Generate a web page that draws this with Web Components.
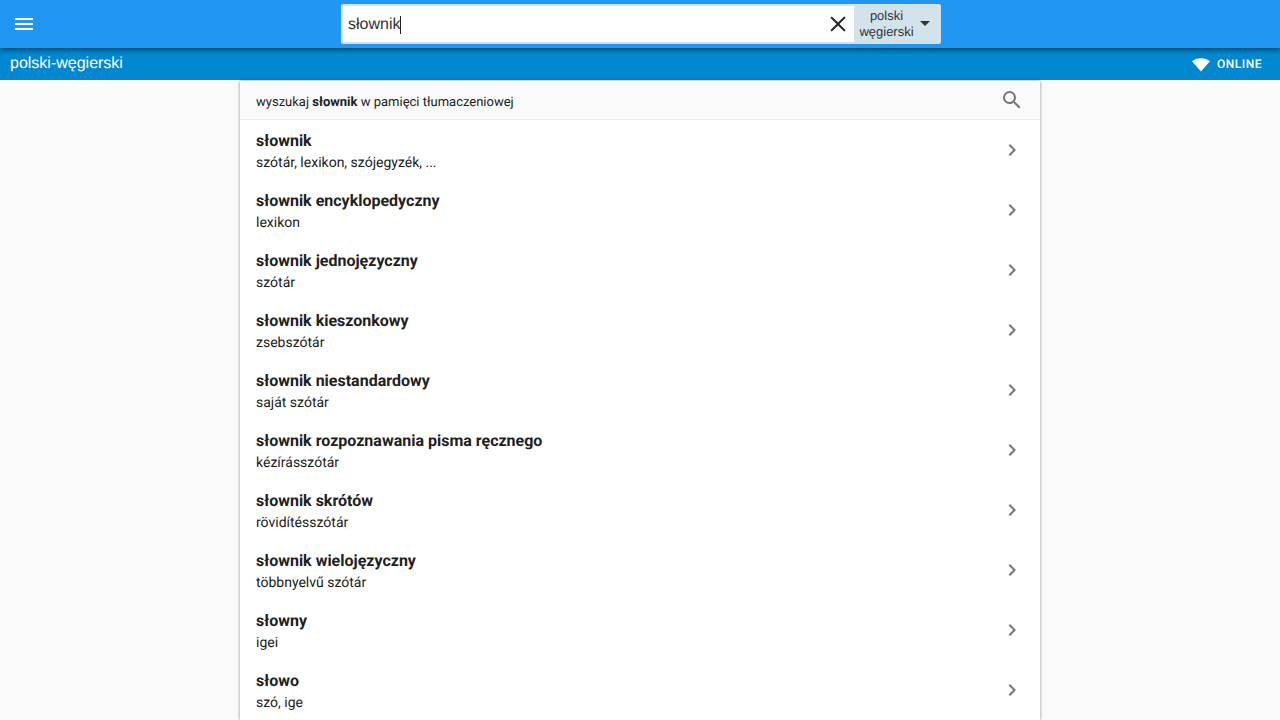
<!DOCTYPE html>
<html lang="pl">
<head>
<meta charset="utf-8">
<title>słownik</title>
<style>
  html, body { margin: 0; height: 720px; overflow: hidden; background: #fafafa; font-family: Roboto, sans-serif; text-rendering: geometricPrecision; }
</style>
</head>
<body>
<app-header></app-header>
<sub-bar label="polski-węgierski"></sub-bar>
<suggest-panel query="słownik">
  <suggest-row term="słownik" meaning="szótár, lexikon, szójegyzék, ..."></suggest-row>
  <suggest-row term="słownik encyklopedyczny" meaning="lexikon"></suggest-row>
  <suggest-row term="słownik jednojęzyczny" meaning="szótár"></suggest-row>
  <suggest-row term="słownik kieszonkowy" meaning="zsebszótár"></suggest-row>
  <suggest-row term="słownik niestandardowy" meaning="saját szótár"></suggest-row>
  <suggest-row term="słownik rozpoznawania pisma ręcznego" meaning="kézírásszótár"></suggest-row>
  <suggest-row term="słownik skrótów" meaning="rövidítésszótár"></suggest-row>
  <suggest-row term="słownik wielojęzyczny" meaning="többnyelvű szótár"></suggest-row>
  <suggest-row term="słowny" meaning="igei"></suggest-row>
  <suggest-row term="słowo" meaning="szó, ige"></suggest-row>
</suggest-panel>

<script>
// Top bar with menu button and search box
class AppHeader extends HTMLElement {
  constructor() {
    super();
    this.attachShadow({ mode: 'open' });
  }

  connectedCallback() {
    this.shadowRoot.innerHTML = `
      <style>
        :host {
          display: grid;
          grid-template-columns: 1fr 600px 1fr;
          align-items: center;
          height: 48px;
          padding-left: 2px;
          background: #2196f3;
          position: relative;
          z-index: 2;
          box-shadow: 0 2px 5px rgba(0, 0, 0, 0.5);
        }
        .menu { display: flex; padding-left: 10px; }
        .search {
          display: flex;
          height: 40px;
          box-sizing: border-box;
          border-radius: 2px;
          overflow: hidden;
          background: #d2e3ec;
        }
        .field {
          flex: 1;
          display: flex;
          align-items: center;
          margin: 2px 0 2px 2px;
          padding-left: 5px;
          background: #fff;
          font-family: "Liberation Sans", sans-serif;
          font-size: 16px;
          color: #333;
        }
        .query { padding-top: 1px; }
        .caret { width: 1px; height: 18px; margin-top: 1px; background: #222; }
        .clear { display: flex; margin-left: auto; margin-right: 4px; }
        .lang {
          width: 87px;
          display: flex;
          align-items: center;
          font-family: "Liberation Sans", sans-serif;
          font-size: 13px;
          line-height: 16px;
          color: #333;
        }
        .lang span { width: 65px; text-align: center; }
      </style>
      <div class="menu">
        <svg width="24" height="24" viewBox="0 0 24 24" fill="#fff"><path d="M3 18h18v-2H3v2zm0-5h18v-2H3v2zm0-7v2h18V6H3z"/></svg>
      </div>
      <div class="search">
        <div class="field"><span class="query">słownik</span><i class="caret"></i>
          <div class="clear"><svg width="24" height="24" viewBox="0 0 24 24" fill="#222"><path d="M19.6 5.8l-1.4-1.4L12 10.6 5.8 4.4 4.4 5.8 10.6 12l-6.2 6.2 1.4 1.4 6.2-6.2 6.2 6.2 1.4-1.4-6.2-6.2z"/></svg></div>
        </div>
        <div class="lang"><span>polski<br>węgierski</span>
          <svg width="12" height="6" viewBox="0 0 12 6" fill="#333"><path d="M1 0h10L6 5z"/></svg>
        </div>
      </div>
      <div></div>
    `;
  }
}

// Second bar: language pair and connection state
class SubBar extends HTMLElement {
  constructor() {
    super();
    this.attachShadow({ mode: 'open' });
  }

  connectedCallback() {
    const label = this.getAttribute('label') || '';
    this.shadowRoot.innerHTML = `
      <style>
        :host {
          display: flex;
          align-items: center;
          height: 32px;
          padding: 0 18px 0 10px;
          background: #0288d1;
          color: #fff;
        }
        .label { font-family: "Liberation Sans", sans-serif; font-size: 16px; }
        .status {
          margin-left: auto;
          display: flex;
          align-items: center;
          gap: 7px;
          font-size: 12px;
          font-weight: 500;
          letter-spacing: 0.5px;
        }
      </style>
      <div class="label">${label}</div>
      <div class="status">
        <svg width="18" height="18" viewBox="0 0 18 18" fill="#fff"><path d="M0 6.200C2.400 4.200 5.500 3.200 9 3.200s6.600 1 9 3L9 16.500z"/></svg>
        ONLINE
      </div>
    `;
  }
}

// White column holding the search hint and the rows
class SuggestPanel extends HTMLElement {
  constructor() {
    super();
    this.attachShadow({ mode: 'open' });
  }

  connectedCallback() {
    const query = this.getAttribute('query') || '';
    this.shadowRoot.innerHTML = `
      <style>
        :host {
          display: block;
          width: 800px;
          margin: 1px auto 0;
          background: #fff;
          box-shadow: 0 0 3px rgba(0, 0, 0, 0.45);
        }
        .hint {
          display: flex;
          align-items: center;
          height: 38px;
          padding: 0 16px;
          background: #fafafa;
          border-bottom: 1px solid #eee;
          font-size: 13px;
          color: #212121;
        }
        .hint span { padding-top: 4px; }
        .hint svg { margin-left: auto; }
        b { font-weight: 700; }
      </style>
      <div class="hint">
        <span>wyszukaj <b>${query}</b> w pamięci tłumaczeniowej</span>
        <svg width="24" height="24" viewBox="0 0 24 24" fill="#757575"><path d="M15.500 14h-.79l-.28-.27A6.470 6.470 0 0 0 16 9.500 6.500 6.500 0 1 0 9.500 16c1.610 0 3.090-.59 4.230-1.570l.27.28v.79l5 4.990L20.490 19l-4.990-5zm-6 0C7.010 14 5 11.990 5 9.500S7.010 5 9.500 5 14 7.010 14 9.500 11.990 14 9.500 14z"/></svg>
      </div>
      <slot></slot>
    `;
  }
}

// One dictionary suggestion
class SuggestRow extends HTMLElement {
  constructor() {
    super();
    this.attachShadow({ mode: 'open' });
  }

  connectedCallback() {
    const term = this.getAttribute('term') || '';
    const meaning = this.getAttribute('meaning') || '';
    this.shadowRoot.innerHTML = `
      <style>
        :host {
          display: flex;
          align-items: center;
          height: 60px;
          padding: 0 16px;
          color: #212121;
        }
        .text { flex: 1; padding-top: 4px; }
        .term { font-size: 16px; font-weight: 700; line-height: 21px; }
        .meaning { font-size: 14px; line-height: 22px; margin-top: 1px; }
        svg { display: block; }
      </style>
      <div class="text">
        <div class="term">${term}</div>
        <div class="meaning">${meaning}</div>
      </div>
      <svg width="24" height="24" viewBox="0 0 24 24" fill="#757575"><path d="M10 6L8.590 7.410 13.170 12l-4.580 4.590L10 18l6-6z"/></svg>
    `;
  }
}

customElements.define('app-header', AppHeader);
customElements.define('sub-bar', SubBar);
customElements.define('suggest-panel', SuggestPanel);
customElements.define('suggest-row', SuggestRow);
</script>
</body>
</html>
